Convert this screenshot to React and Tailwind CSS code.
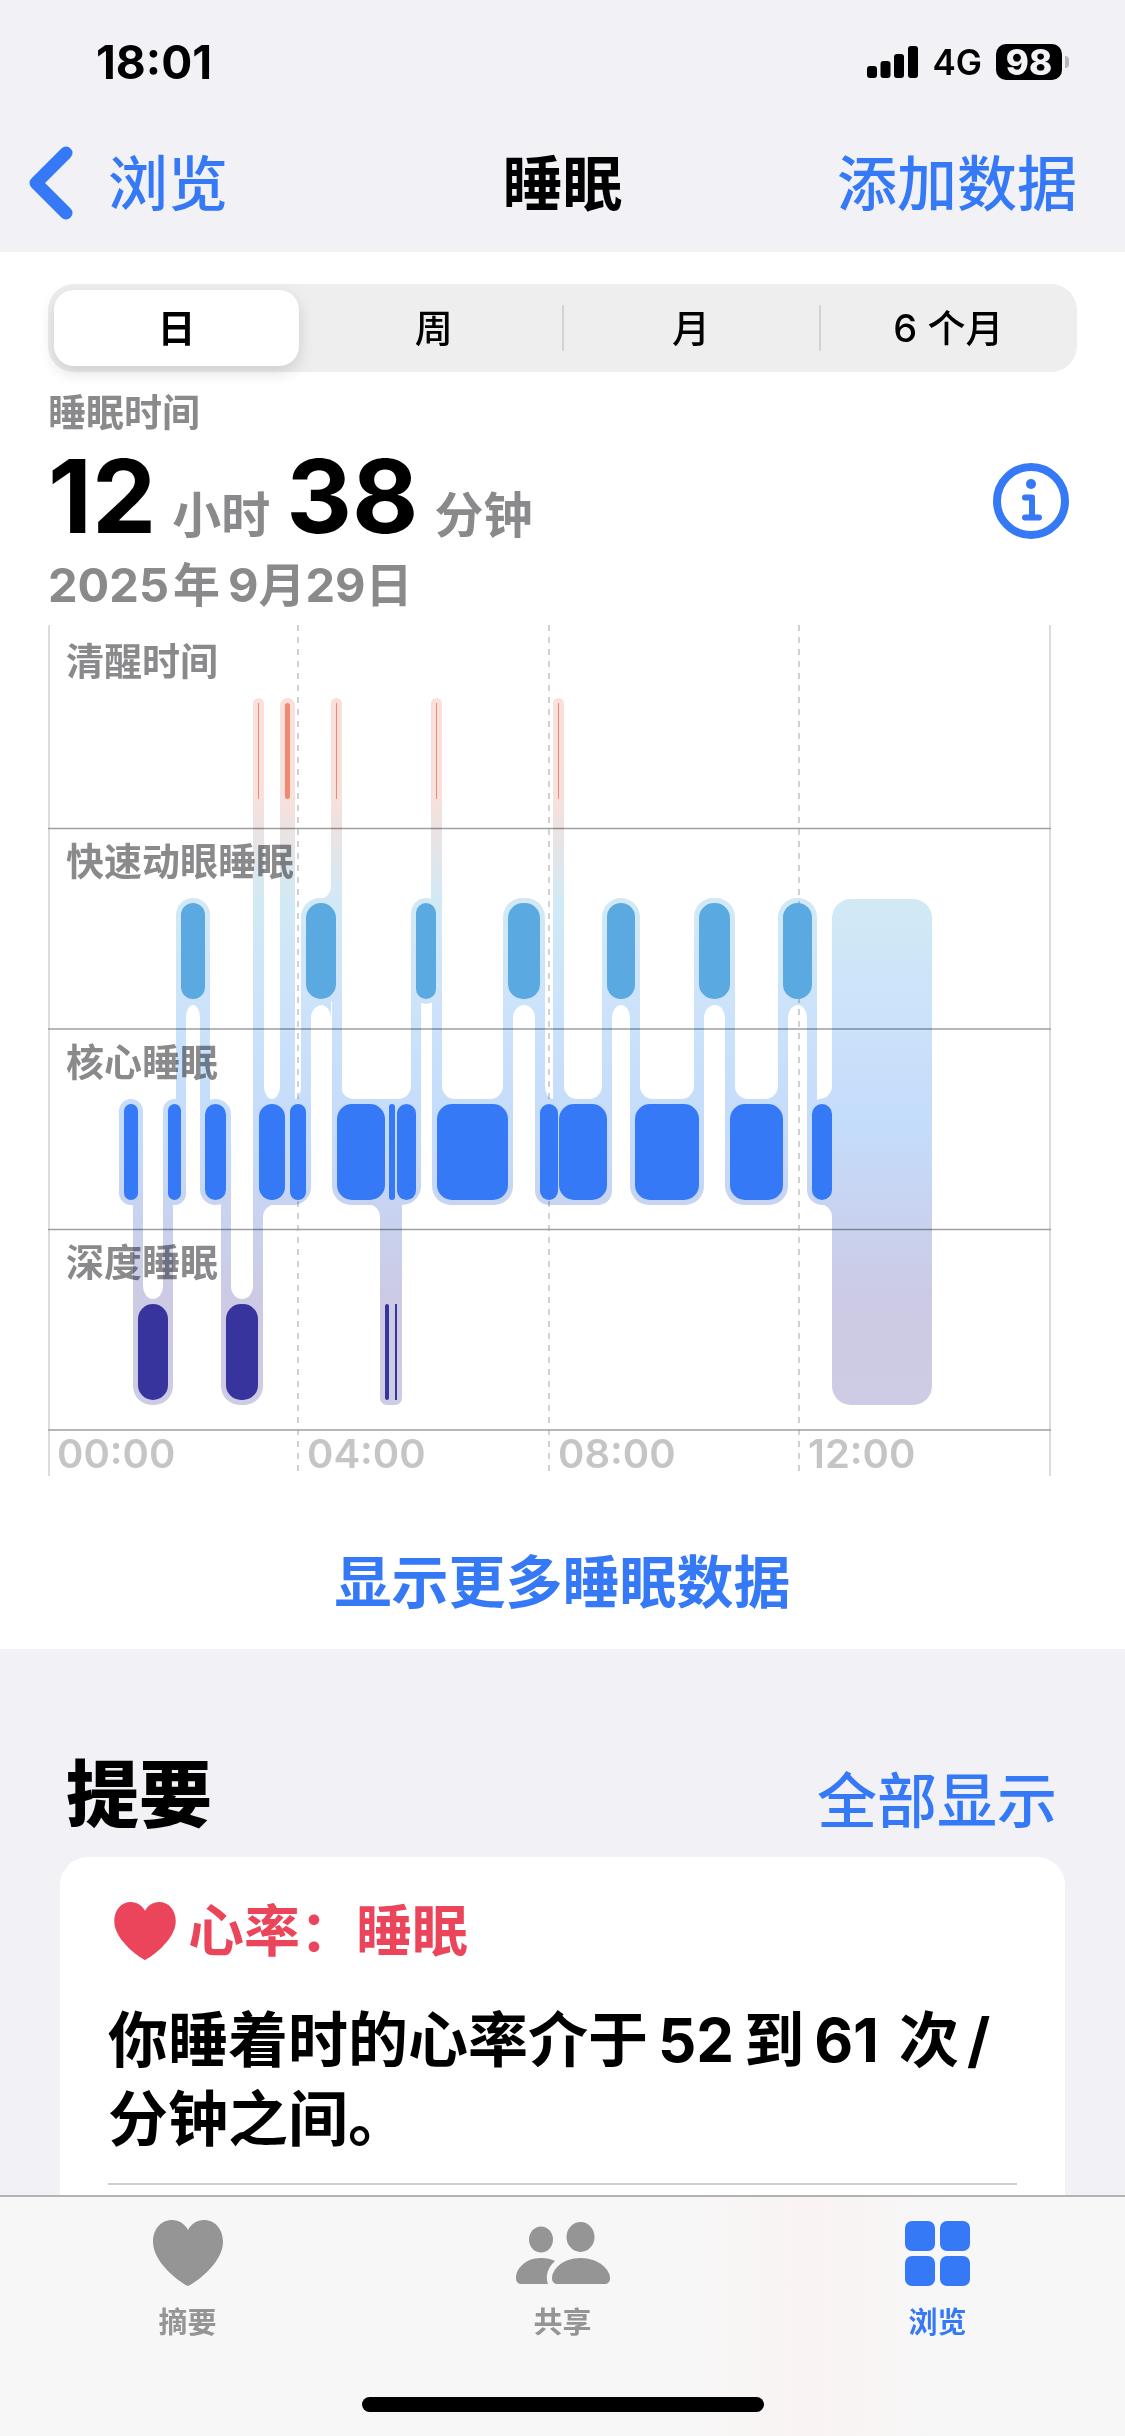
import React, { useState } from "react";

// chart rows: y of the bars in each sleep stage
const ROWS = {
  awake: { y: 78, color: "#f08872" },
  rem: { y: 278, color: "#5aa9e1" },
  core: { y: 479, color: "#3579f7" },
  deep: { y: 679, color: "#37349d" },
};
const BAR_H = 96;
const PAD = 5;

// [stage, start, end] in order of time
const SEGMENTS = [
  ["core", 76, 90],
  ["deep", 90, 120],
  ["core", 120, 133],
  ["rem", 133, 157],
  ["core", 157, 178],
  ["deep", 178, 210],
  ["awake", 210, 211],
  ["core", 211, 237],
  ["awake", 237, 242],
  ["core", 242, 258],
  ["rem", 258, 288],
  ["awake", 288, 289],
  ["core", 289, 337],
  ["deep", 337, 341],
  ["core", 341, 347],
  ["deep", 347, 349],
  ["core", 349, 368],
  ["rem", 368, 388],
  ["awake", 388, 389],
  ["core", 389, 460],
  ["rem", 460, 492],
  ["core", 492, 510],
  ["awake", 510, 511],
  ["core", 511, 559],
  ["rem", 559, 587],
  ["core", 587, 651],
  ["rem", 651, 682],
  ["core", 682, 735],
  ["rem", 735, 764],
  ["core", 764, 784],
];

// inner corners where a connector meets a bar outline: [x, y, dx, dy]
const FILLETS = [
  [138, 380, 7, 13], [152, 380, -7, 13],
  [263, 380, 11, 13], [283, 380, -10, 13],
  [465, 380, 11, 13], [487, 380, -11, 13],
  [564, 380, 9, 13], [582, 380, -9, 13],
  [656, 380, 11, 13], [677, 380, -10, 13],
  [740, 380, 10, 13], [759, 380, -9, 13],
  [216, 474, 8, -13], [232, 474, -8, -13],
  [253, 474, -6, -13],
  [293, 474, 13, -13], [363, 474, -13, -13],
  [394, 474, 13, -13], [455, 474, -13, -13],
  [497, 474, 8, -13],
  [516, 474, 13, -13], [554, 474, -13, -13],
  [592, 474, 13, -13], [646, 474, -13, -13],
  [687, 474, 13, -13], [730, 474, -13, -13],
  [784, 474, -13, -13],
  [95, 674, 10, -13], [115, 674, -10, -13],
  [183, 674, 11, -13], [205, 674, -11, -13],
  [215, 579, 14, 13],
  [332, 579, -13, 13],
  [784, 579, -13, 13],
  [283, 274, -12, -13],
];

const STAGE_LABELS = [
  ["清醒时间", 50],
  ["快速动眼睡眠", 250],
  ["核心睡眠", 451],
  ["深度睡眠", 651],
];

const HOURS = [
  ["00:00", 9],
  ["04:00", 259],
  ["08:00", 510],
  ["12:00", 760],
];

// bars of one stage that nearly touch share one outline
function outlines() {
  const out = [];
  Object.keys(ROWS).forEach((stage) => {
    let last = null;
    SEGMENTS.filter((s) => s[0] === stage).forEach(([, start, end]) => {
      if (last && start - last.end <= 6) {
        last.end = end;
      } else {
        last = { stage, start, end, r: Math.min((end - start) / 2 + PAD, 19) };
        out.push(last);
      }
    });
  });
  return out;
}

// every piece is wound clockwise so that overlaps stay filled
function fillet([x, y, dx, dy]) {
  const inner = y - Math.sign(dy) * 6;
  const rx = Math.abs(dx);
  const ry = Math.abs(dy);
  return dx * dy > 0
    ? `M${x} ${inner}H${x + dx}V${y}A${rx} ${ry} 0 0 0 ${x} ${y + dy}z`
    : `M${x} ${y + dy}A${rx} ${ry} 0 0 0 ${x + dx} ${y}V${inner}H${x}z`;
}

function roundRect(x, y, w, h, r) {
  return (
    `M${x + r} ${y}H${x + w - r}A${r} ${r} 0 0 1 ${x + w} ${y + r}V${y + h - r}` +
    `A${r} ${r} 0 0 1 ${x + w - r} ${y + h}H${x + r}A${r} ${r} 0 0 1 ${x} ${y + h - r}` +
    `V${y + r}A${r} ${r} 0 0 1 ${x + r} ${y}z`
  );
}

function SleepChart() {
  return (
    <svg viewBox="0 0 1003 852" className="block w-full" role="img" aria-label="睡眠阶段">
      <defs>
        <linearGradient id="stages" gradientUnits="userSpaceOnUse" x1="0" y1="73" x2="0" y2="779">
          <stop offset="0" stopColor="#f9e0db" />
          <stop offset="0.14" stopColor="#f8e0db" />
          <stop offset="0.285" stopColor="#d2e9f5" />
          <stop offset="0.43" stopColor="#cce3fa" />
          <stop offset="0.61" stopColor="#c4dcfb" />
          <stop offset="0.85" stopColor="#cccae4" />
          <stop offset="1" stopColor="#cdcce4" />
        </linearGradient>
      </defs>

      <g stroke="#d1d1d3" strokeWidth="2">
        <path d="M1 0V851" strokeWidth="1.5" />
        <path d="M1002 0V851" strokeWidth="1.5" />
        <path d="M250 0V851M501 0V851M751 0V851" strokeDasharray="6 6" />
      </g>
      <g stroke="#a0a0a3" strokeWidth="1.5">
        <path d="M0 203.5H1003M0 404H1003M0 604.5H1003M0 805H1003" />
      </g>

      <g fill="#8a8a8c" fontSize="38" fontWeight="600">
        {STAGE_LABELS.map(([text, y]) => (
          <text key={text} x="18" y={y}>{text}</text>
        ))}
      </g>
      <g fill="#c5c5c6" fontSize="40" fontWeight="600">
        {HOURS.map(([text, x]) => (
          <text key={text} x={x} y="843">{text}</text>
        ))}
      </g>

      <g fill="url(#stages)" className="mix-blend-multiply">
        <path
          d={[
            ...outlines().map(({ stage, start, end, r }) =>
              roundRect(start - PAD, ROWS[stage].y - PAD, end - start + PAD * 2, BAR_H + PAD * 2, r)
            ),
            ...SEGMENTS.slice(1).map(([stage, x], i) => {
              const a = ROWS[SEGMENTS[i][0]].y + 48;
              const b = ROWS[stage].y + 48;
              return `M${x - 5} ${Math.min(a, b)}h10V${Math.max(a, b)}h-10z`;
            }),
            ...FILLETS.map(fillet),
            roundRect(784, 274, 100, 506, 19),
          ].join("")}
        />
      </g>

      {SEGMENTS.map(([stage, start, end]) => (
        <rect
          key={start}
          x={start}
          y={ROWS[stage].y}
          width={end - start}
          height={BAR_H}
          rx={end - start > 2 ? Math.min((end - start) / 2, 15) : 0}
          fill={ROWS[stage].color}
        />
      ))}
    </svg>
  );
}

function Heart({ className }) {
  return (
    <svg viewBox="0 0 70 66" className={className} fill="currentColor" aria-hidden="true">
      <path d="M35 66C33 66 0 45 0 22C0 9 8 0 19 0C26 0 32 4 35 10C38 4 44 0 51 0C62 0 70 9 70 22C70 45 37 66 35 66Z" />
    </svg>
  );
}

function PeopleIcon() {
  return (
    <svg viewBox="0 0 94 62" className="h-[62px] w-[94px]" fill="currentColor" aria-hidden="true">
      <ellipse cx="25" cy="17.5" rx="12" ry="13" />
      <ellipse cx="64.5" cy="15" rx="14" ry="15" />
      <path d="M6 62C2 62 0 60 0 56C0 47 9 36 25 36C31 36 35 37 39 39C32 45 29 54 32 62Z" />
      <path d="M42 62C38 62 36 60 36 56C36 48 46 36 64.5 36C83 36 94 48 94 56C94 60 92 62 88 62Z" />
    </svg>
  );
}

function GridIcon() {
  return (
    <svg viewBox="0 0 65 65" className="h-[65px] w-[65px]" fill="currentColor" aria-hidden="true">
      <rect width="30" height="30" rx="7" />
      <rect x="35" width="30" height="30" rx="7" />
      <rect y="35" width="30" height="30" rx="7" />
      <rect x="35" y="35" width="30" height="30" rx="7" />
    </svg>
  );
}

function StatusBar() {
  return (
    <div className="flex h-[124px] items-center justify-between pl-24 pr-14">
      <span className="text-[46px] font-bold leading-none">18:01</span>
      <div className="flex items-center gap-3.5">
        <svg viewBox="0 0 51 32" className="h-8 w-[51px]" aria-hidden="true">
          <rect y="20" width="10" height="12" rx="3" />
          <rect x="13.5" y="15" width="10" height="17" rx="3" />
          <rect x="27" y="8" width="10" height="24" rx="3" />
          <rect x="41" width="10" height="32" rx="3" />
        </svg>
        <span className="text-[35px] font-semibold leading-none">4G</span>
        <div className="flex items-center gap-[3px]">
          <span className="flex h-9 w-[66px] items-center justify-center rounded-[10px] bg-black text-[35px] font-extrabold leading-none text-[#f1f1f6]">
            98
          </span>
          <span className="h-3 w-1 rounded-r-full bg-[#b5b5ba]" />
        </div>
      </div>
    </div>
  );
}

const RANGES = ["日", "周", "月", "6 个月"];

function RangeTabs() {
  const [active, setActive] = useState(0);
  return (
    <div className="flex h-[88px] items-center rounded-[26px] bg-[#eeeeee]">
      {RANGES.map((label, i) => (
        <React.Fragment key={label}>
          {i > 0 && (
            <span
              className={
                i === active || i === active + 1
                  ? "-mx-px h-[46px] w-[2px]"
                  : "-mx-px h-[46px] w-[2px] bg-[#d3d3d4]"
              }
            />
          )}
          <div className="flex h-full flex-1 p-1.5">
            <button
              type="button"
              onClick={() => setActive(i)}
              className={
                i === active
                  ? "flex-1 rounded-[20px] bg-white text-[38px] font-semibold shadow-[0_6px_16px_rgba(0,0,0,0.14)]"
                  : "flex-1 rounded-[20px] text-[38px] font-medium"
              }
            >
              {label}
            </button>
          </div>
        </React.Fragment>
      ))}
    </div>
  );
}

const TABS = [
  { label: "摘要", icon: <Heart className="h-[66px] w-[70px]" /> },
  { label: "共享", icon: <PeopleIcon /> },
  { label: "浏览", icon: <GridIcon />, active: true },
];

export default function App() {
  return (
    <div className="flex h-screen flex-col bg-[#f1f1f6] font-[Inter,'Noto_Sans_CJK_SC',sans-serif] text-black">
      <header>
        <StatusBar />
        <nav className="grid h-32 grid-cols-3 items-start px-7 pt-[22px] text-[60px] leading-[76px]">
          <a href="#browse" className="flex items-center gap-[34px] font-medium text-[#3579f7]">
            <svg viewBox="0 0 46 76" className="h-[76px] w-[46px]" fill="none" stroke="currentColor" strokeWidth="13" strokeLinecap="round" strokeLinejoin="round" aria-hidden="true">
              <path d="M38 7L8 37L38 67" />
            </svg>
            浏览
          </a>
          <h1 className="text-center font-bold">睡眠</h1>
          <a href="#add" className="pr-5 text-right font-medium text-[#3579f7]">添加数据</a>
        </nav>
      </header>

      <main className="flex flex-1 flex-col overflow-hidden">
        <section className="bg-white px-12 pt-8">
          <RangeTabs />

          <div className="flex items-center justify-between pr-2">
            <div className="font-bold text-[#8a8a8c]">
              <p className="pt-3 text-[38px] leading-[56px]">睡眠时间</p>
              <p className="flex items-baseline gap-4 text-[49px] leading-none">
                <span className="text-[102px] leading-[112px] text-black">12</span>
                小时
                <span className="text-[102px] leading-[112px] text-black">38</span>
                分钟
              </p>
              <p className="pb-[7px] text-[47px] leading-[66px]">
                2025<span className="ml-1 mr-2">年</span>9月29日
              </p>
            </div>
            <button type="button" aria-label="关于睡眠" className="pt-1 text-[#3579f7]">
              <svg viewBox="0 0 76 76" className="h-19 w-19" fill="none" stroke="currentColor" strokeLinecap="round" strokeLinejoin="round" aria-hidden="true">
                <circle cx="38" cy="38" r="34" strokeWidth="8" />
                <circle cx="38" cy="21" r="5" fill="currentColor" stroke="none" />
                <path d="M32 34.5H39V54.5M32 54.5H46" strokeWidth="6" />
              </svg>
            </button>
          </div>

          <div className="pr-[26px]">
            <SleepChart />
          </div>

          <div className="flex justify-center pb-6 pt-16">
            <button type="button" className="text-[57px] font-semibold leading-[84px] text-[#3579f7]">
              显示更多睡眠数据
            </button>
          </div>
        </section>

        <section className="flex flex-1 flex-col px-15 pt-24">
          <div className="flex items-end justify-between pb-3 pl-1.5 pr-2">
            <h2 className="text-[73px] font-extrabold leading-[100px]">提要</h2>
            <a href="#all" className="text-[60px] font-medium leading-[88px] text-[#3579f7]">全部显示</a>
          </div>
          <article className="flex-1 rounded-t-[28px] bg-white px-12 pt-8 font-bold">
            <h3 className="flex items-center gap-3 pl-1.5 text-[56px] leading-[84px] text-[#ea455a]">
              <Heart className="h-[58px] w-[62px]" />
              心率：睡眠
            </h3>
            <p className="mt-7 text-[60px] leading-[79px]">
              你睡着时的心率介于<span className="mx-2.5">52</span>到<span className="ml-2.5 mr-5">61</span>次<span className="ml-2">/</span>
              <br />
              分钟之间。
            </p>
            <hr className="mt-6 border-t-2 border-[#cfcfd1]" />
          </article>
        </section>
      </main>

      <footer className="border-t-2 border-[#b3b3b5] bg-[#f7f7f7] bg-[linear-gradient(90deg,transparent_60%,#faf3f3_72%,transparent_84%)]">
        <nav className="grid grid-cols-3 pt-[22px]">
          {TABS.map(({ label, icon, active }) => (
            <a
              key={label}
              href={"#" + label}
              className={
                active
                  ? "flex flex-col items-center gap-4 text-[#3579f7]"
                  : "flex flex-col items-center gap-4 text-[#959595]"
              }
            >
              <span className="flex h-[68px] items-center">{icon}</span>
              <span className="text-[29px] font-semibold leading-10">{label}</span>
            </a>
          ))}
        </nav>
        <div className="mx-auto mb-6 mt-[54px] h-[15px] w-[402px] rounded-full bg-black" />
      </footer>
    </div>
  );
}
